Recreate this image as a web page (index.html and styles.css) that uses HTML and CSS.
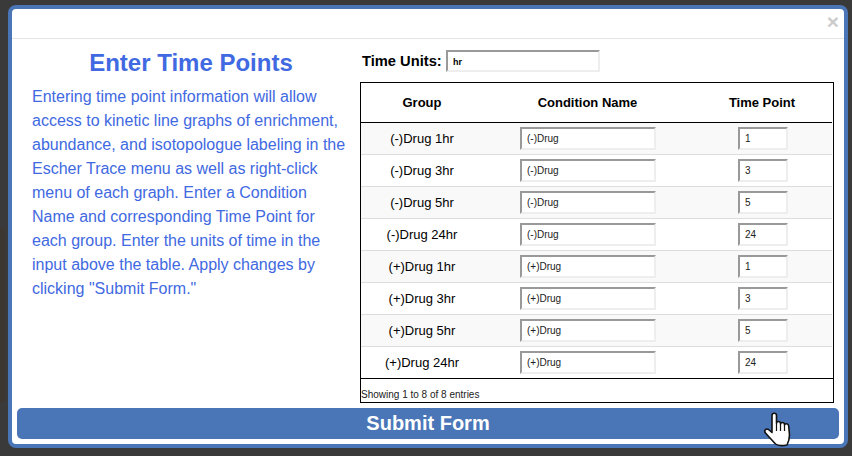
FILE: index.html
```html
<!DOCTYPE html>
<html lang="en">
<head>
<meta charset="utf-8">
<title>Enter Time Points</title>
<link rel="stylesheet" href="styles.css">
</head>
<body>
<div class="backdrop-panel"></div>
<div class="modal">
  <div class="modal-header"><span class="close">×</span></div>
  <div class="modal-body">
    <div class="intro">
      <h2>Enter Time Points</h2>
      <p>Entering time point information will allow access to kinetic line graphs of enrichment, abundance, and isotopologue labeling in the Escher Trace menu as well as right-click menu of each graph. Enter a Condition Name and corresponding Time Point for each group. Enter the units of time in the input above the table. Apply changes by clicking "Submit Form."</p>
    </div>
    <div class="form-side">
      <div class="units"><label>Time Units:</label><input class="units-input" value="hr"></div>
      <div class="table-wrap">
        <table>
          <thead><tr><th class="c1">Group</th><th class="c2">Condition Name</th><th class="c3">Time Point</th></tr></thead>
          <tbody>
            <tr><td>(-)Drug 1hr</td><td><input class="name" value="(-)Drug"></td><td><input class="time" value="1"></td></tr>
            <tr><td>(-)Drug 3hr</td><td><input class="name" value="(-)Drug"></td><td><input class="time" value="3"></td></tr>
            <tr><td>(-)Drug 5hr</td><td><input class="name" value="(-)Drug"></td><td><input class="time" value="5"></td></tr>
            <tr><td>(-)Drug 24hr</td><td><input class="name" value="(-)Drug"></td><td><input class="time" value="24"></td></tr>
            <tr><td>(+)Drug 1hr</td><td><input class="name" value="(+)Drug"></td><td><input class="time" value="1"></td></tr>
            <tr><td>(+)Drug 3hr</td><td><input class="name" value="(+)Drug"></td><td><input class="time" value="3"></td></tr>
            <tr><td>(+)Drug 5hr</td><td><input class="name" value="(+)Drug"></td><td><input class="time" value="5"></td></tr>
            <tr><td>(+)Drug 24hr</td><td><input class="name" value="(+)Drug"></td><td><input class="time" value="24"></td></tr>
          </tbody>
        </table>
        <div class="info">Showing 1 to 8 of 8 entries</div>
      </div>
    </div>
  </div>
  <button class="submit">Submit Form</button>
</div>
<svg class="cursor" width="34" height="40" viewBox="0 0 34 40" aria-hidden="true">
  <path d="M12 5.5C12 2.5 16.5 2.5 16.5 5.5L16.5 13C17 11 20 11 20.5 13L20.5 14C21 12 24 12 24.5 14L24.5 15C25 13 28.5 13.5 28.7 16L29.5 25C29.5 29 28.5 32 27 35C22 36 18 36 15.5 34C12 30 8 26 5.5 23C3.5 20.5 6 18 8.5 19.5L12 22.5Z" fill="#fff" stroke="#111" stroke-width="1.6" stroke-linejoin="round"/>
  <path d="M16.5 13V21M20.5 14V21M24.5 15V21" fill="none" stroke="#111" stroke-width="1.2"/>
</svg>
</body>
</html>
```
FILE: styles.css
```css
* { box-sizing: border-box; }
html, body { margin: 0; height: 456px; overflow: hidden; }
body {
  background: #3a3a3a;
  font-family: "Liberation Sans", Arial, sans-serif;
  position: relative;
}
.backdrop-panel {
  position: absolute;
  left: 0;
  top: 228px;
  width: 5px;
  height: 174px;
  background: #3c3831;
}
.modal {
  position: relative;
  width: 840px;
  height: 443px;
  margin: 5px 4px 0 8px;
  background: #fff;
  border: 4px solid #4a76b8;
  border-radius: 8px;
  display: flex;
  flex-direction: column;
}
.modal-header {
  height: 30px;
  flex: none;
  border-bottom: 1px solid #e5e5e5;
  display: flex;
  justify-content: flex-end;
}
.close {
  font-size: 21px;
  font-weight: bold;
  line-height: 26px;
  color: #ccc;
  padding-right: 5px;
}
.modal-body {
  flex: 1;
  display: flex;
  min-height: 0;
}
.intro {
  width: 338px;
  margin-right: 10px;
  flex: none;
  padding: 9px 0 0 20px;
  color: #4169e1;
}
.intro h2 {
  margin: 0 0 7px;
  font-size: 24px;
  line-height: 30px;
  font-weight: bold;
  text-align: center;
}
.intro p {
  margin: 0;
  font-size: 16px;
  line-height: 24px;
}
.form-side {
  width: 474px;
  flex: none;
  padding-top: 11px;
}
.units {
  display: flex;
  align-items: center;
  height: 22px;
  margin-bottom: 10px;
}
.units label {
  font-size: 14.7px;
  font-weight: bold;
  color: #000;
  margin-left: 2px;
  width: 84px;
  white-space: nowrap;
}
input {
  border: 2px solid;
  border-color: #999 #eee #eee #999;
  background: #fff;
  font-family: "Liberation Sans", Arial, sans-serif;
  color: #000;
  padding: 1px 5px;
  margin: 0;
  display: inline-block;
  vertical-align: middle;
  border-radius: 0;
}
.units-input {
  width: 154px;
  height: 22px;
  font-size: 9px;
  font-weight: bold;
  padding-top: 3px;
}
.table-wrap {
  border: 1px solid #000;
  height: 321px;
}
table {
  border-collapse: collapse;
  table-layout: fixed;
  width: 471px;
  font-size: 13px;
  color: #000;
}
.c1 { width: 123px; }
.c2 { width: 208px; }
.c3 { width: 140px; }
th {
  height: 39px;
  font-weight: bold;
  text-align: center;
  border-bottom: 1px solid #000;
  padding: 0;
}
th.c1, th.c2 { padding-right: 1px; }
td {
  height: 32px;
  padding: 0;
  text-align: center;
  border-bottom: 1px solid #ddd;
}
td:first-child { padding-right: 1px; }
td:last-child { padding-left: 2px; }
tbody tr:nth-child(odd) { background: #f9f9f9; }
tbody tr:last-child td { border-bottom: none; height: 32px; }
.name { width: 136px; height: 23px; font-size: 10px; color: #222; }
.time { width: 50px; height: 23px; font-size: 10px; color: #222; }
.info {
  border-top: 1px solid #000;
  font-size: 10px;
  line-height: 11px;
  padding-top: 10px;
  color: #222;
}
.submit {
  flex: none;
  height: 31px;
  margin: 5px 5px 5px 5px;
  border: none;
  border-radius: 5px;
  background: #4a76b8;
  color: #fff;
  font-family: "Liberation Sans", Arial, sans-serif;
  font-size: 20px;
  font-weight: bold;
  padding: 0;
}
.cursor {
  position: absolute;
  left: 760px;
  top: 410px;
}
```
